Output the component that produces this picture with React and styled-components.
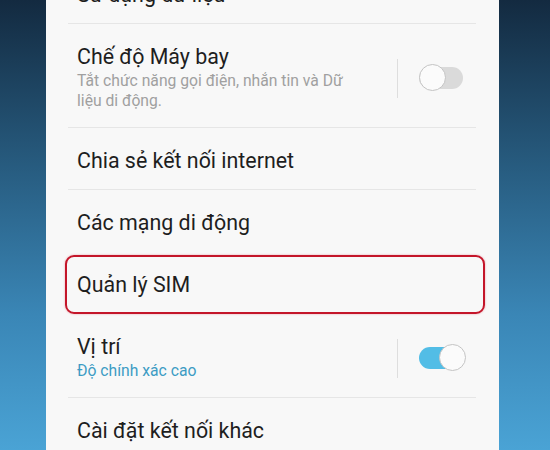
import React from "react"
import styled, { createGlobalStyle } from "styled-components"

const GlobalStyle = createGlobalStyle`
  html, body {
    margin: 0;
    padding: 0;
  }
  body {
    font-family: Roboto, "Noto Sans", "Liberation Sans", sans-serif;
  }
`

const Screen = styled.div`
  width: 550px;
  height: 450px;
  overflow: hidden;
  background: linear-gradient(180deg, #132a40 0%, #26597c 35%, #3a86b6 70%, #4aa3d5 100%);
  padding-left: 46px;
  box-sizing: border-box;
`

const Panel = styled.div`
  width: 453px;
  height: 500px;
  margin-top: -38px;
  background-color: #f8f8f8;
  padding: 0 23px 0 22px;
  box-sizing: border-box;
`

const Row = styled.div`
  display: flex;
  align-items: center;
  padding: 19px 0 ${({ $divider }) => ($divider ? "14px" : "15px")} 9px;
  border-bottom: ${({ $divider }) => ($divider ? "1px solid #e6e6e6" : "none")};
`

const Marked = styled.div`
  display: flex;
  align-items: center;
  margin: 3px -9px 0 -3px;
  padding: 14px 0 13px 10px;
  border: 2px solid #c4162a;
  border-radius: 9px;
  box-shadow: 0 0 2px rgba(220, 40, 60, 0.45);
`

const Texts = styled.div`
  flex: 1;
  max-width: 290px;
`

const Title = styled.div`
  font-size: 21.4px;
  line-height: 28px;
  color: #1e1e1e;
`

const Sub = styled.div`
  font-size: 15.7px;
  line-height: 20px;
  margin-bottom: 2px;
  color: ${({ $accent }) => ($accent ? "#3d9cc4" : "#a0a0a0")};
`

const Control = styled.div`
  margin-left: auto;
  display: flex;
  align-items: center;
  gap: 21px;
  padding-right: 13px;
`

const Bar = styled.div`
  width: 1px;
  height: 39px;
  background-color: #dedede;
`

const Track = styled.div`
  position: relative;
  width: 44px;
  height: 22px;
  border-radius: 11px;
  background-color: ${({ $on }) => ($on ? "#52bde6" : "#dadada")};
`

const Knob = styled.div`
  position: absolute;
  top: -3px;
  ${({ $on }) => ($on ? "right: -3px;" : "left: 0;")}
  width: 27px;
  height: 27px;
  border-radius: 50%;
  background-color: #fbfbfb;
  border: 1px solid #c4c4c4;
  box-sizing: border-box;
`

const Switch = ({ on }) => (
  <Control>
    <Bar />
    <Track $on={on}>
      <Knob $on={on} />
    </Track>
  </Control>
)

const App = () => (
  <>
    <GlobalStyle />
    <Screen>
      <Panel>
        <Row $divider>
          <Texts>
            <Title>Sử dụng dữ liệu</Title>
          </Texts>
        </Row>
        <Row $divider>
          <Texts>
            <Title>Chế độ Máy bay</Title>
            <Sub>Tắt chức năng gọi điện, nhắn tin và Dữ liệu di động.</Sub>
          </Texts>
          <Switch on={false} />
        </Row>
        <Row $divider>
          <Texts>
            <Title>Chia sẻ kết nối internet</Title>
          </Texts>
        </Row>
        <Row>
          <Texts>
            <Title>Các mạng di động</Title>
          </Texts>
        </Row>
        <Marked>
          <Texts>
            <Title>Quản lý SIM</Title>
          </Texts>
        </Marked>
        <Row $divider>
          <Texts>
            <Title>Vị trí</Title>
            <Sub $accent>Độ chính xác cao</Sub>
          </Texts>
          <Switch on />
        </Row>
        <Row>
          <Texts>
            <Title>Cài đặt kết nối khác</Title>
          </Texts>
        </Row>
      </Panel>
    </Screen>
  </>
)

export default App
